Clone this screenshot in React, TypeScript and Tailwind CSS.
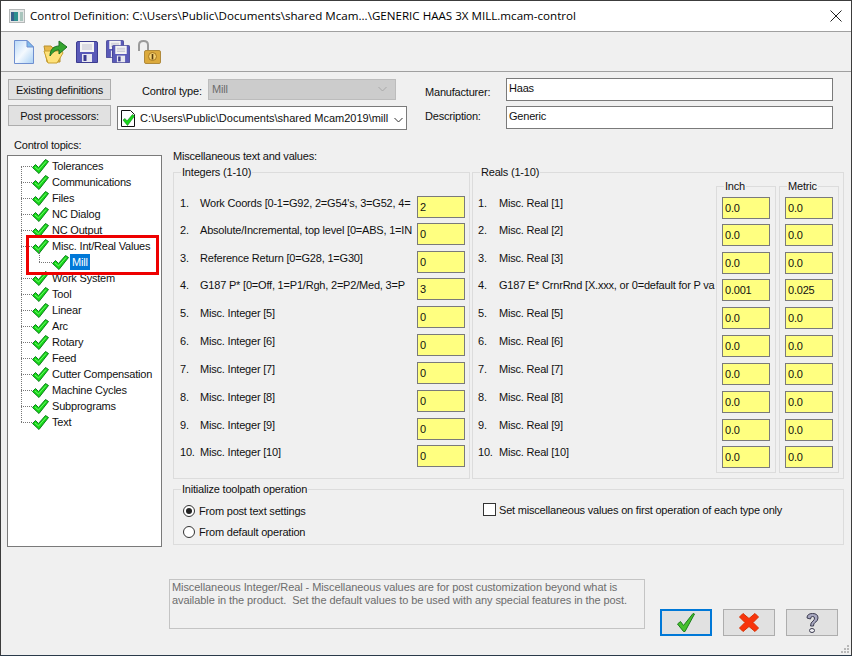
const FONT = "font-['Liberation_Sans',Arial,sans-serif]";

const TOPICS_TOP = ["Tolerances", "Communications", "Files", "NC Dialog", "NC Output", "Misc. Int/Real Values"];
const TOPICS_BOTTOM = ["Work System", "Tool", "Linear", "Arc", "Rotary", "Feed", "Cutter Compensation", "Machine Cycles", "Subprograms", "Text"];

// row pitch in the dialog is not quite even
const ROW_HEIGHTS = ["h-[27px]", "h-[28px]", "h-[27px]", "h-[28px]", "h-[28px]", "h-[28px]", "h-[28px]", "h-[28px]", "h-[27px]", "h-[27px]"];

const INTEGERS = [
  ["Work Coords [0-1=G92, 2=G54's, 3=G52, 4=", "2"],
  ["Absolute/Incremental, top level [0=ABS, 1=IN", "0"],
  ["Reference Return [0=G28, 1=G30]", "0"],
  ["G187 P* [0=Off, 1=P1/Rgh, 2=P2/Med, 3=P", "3"],
  ["Misc. Integer [5]", "0"],
  ["Misc. Integer [6]", "0"],
  ["Misc. Integer [7]", "0"],
  ["Misc. Integer [8]", "0"],
  ["Misc. Integer [9]", "0"],
  ["Misc. Integer [10]", "0"],
];

const REALS = [
  ["Misc. Real [1]", "0.0", "0.0"],
  ["Misc. Real [2]", "0.0", "0.0"],
  ["Misc. Real [3]", "0.0", "0.0"],
  ["G187 E* CrnrRnd [X.xxx, or 0=default for P va", "0.001", "0.025"],
  ["Misc. Real [5]", "0.0", "0.0"],
  ["Misc. Real [6]", "0.0", "0.0"],
  ["Misc. Real [7]", "0.0", "0.0"],
  ["Misc. Real [8]", "0.0", "0.0"],
  ["Misc. Real [9]", "0.0", "0.0"],
  ["Misc. Real [10]", "0.0", "0.0"],
];

const TreeCheck = () => (
  <svg width="17" height="15" viewBox="0 0 17 15" className="shrink-0">
    <path d="M0.5 8.5 L3.5 5.5 L6.5 8.5 L13.5 0.5 L16.5 2.5 L7 14.5 Z" fill="#16d816" stroke="#0c7d1c" strokeWidth="1" strokeLinejoin="round" />
    <path d="M3 8 L6.5 11 L14 2.5" fill="none" stroke="#6cf56c" strokeWidth="1" />
  </svg>
);

const TopicRow = ({ label }: { label: string }) => (
  <div className="flex items-center h-4 pl-[13px]">
    <div className="w-[11px] shrink-0 border-t border-dotted border-[#777]" />
    <TreeCheck />
    <span className="ml-[3px] whitespace-nowrap">{label}</span>
  </div>
);

const YellowBox = ({ value }: { value: string }) => (
  <div className="w-[48px] h-[22px] shrink-0 border border-[#7a7a7a] bg-[#ffff80] pl-[2px] pt-[3px] leading-[14px]">{value}</div>
);

const Group = ({ title, className, children }: { title: string; className: string; children: React.ReactNode }) => (
  <div className={`relative border border-[#dcdcdc] ${className}`}>
    <span className="absolute left-[7px] top-[-7px] bg-[#f0f0f0] px-px leading-[13px] whitespace-nowrap">{title}</span>
    {children}
  </div>
);

const Button = ({ children, className }: { children: React.ReactNode; className: string }) => (
  <div className={`flex items-center justify-center border border-[#adadad] bg-[#e1e1e1] ${className}`}>{children}</div>
);

const TextField = ({ value }: { value: string }) => (
  <div className="w-[327px] h-[23px] border border-[#7a7a7a] bg-white pl-[2px] pt-[2px] leading-[15px]">{value}</div>
);

const Chevron = ({ color }: { color: string }) => (
  <svg width="9" height="6" viewBox="0 0 9 6"><path d="M0.5 1 L4.5 5 L8.5 1" fill="none" stroke={color} strokeWidth="1" /></svg>
);

const NewIcon = () => (
  <svg width="20" height="24" viewBox="0 0 20 24">
    <defs>
      <linearGradient id="page" x1="0" y1="0" x2="1" y2="1">
        <stop offset="0" stopColor="#b8d8f8" />
        <stop offset="0.5" stopColor="#f4f9fe" />
        <stop offset="1" stopColor="#a8d0f4" />
      </linearGradient>
    </defs>
    <path d="M0.5 0.5 H13 L19.5 7 V23.5 H0.5 Z" fill="url(#page)" stroke="#6f8fd0" />
    <path d="M13 0.5 V7 H19.5 Z" fill="#7fbcec" stroke="#6f8fd0" />
  </svg>
);

const OpenIcon = () => (
  <svg width="25" height="24" viewBox="0 0 25 24">
    <path d="M1 6 H8 L10 8 H17 V22 H4 Z" fill="#e8b84a" stroke="#b8902c" />
    <path d="M5 23 L1 11 H19 L20 13 L14 23 Z" fill="#ffe27a" stroke="#c8a030" />
    <path d="M7 16 C7 9 11 6 16 6 V1 L24 7 L16 14 V10 C12 10 10 12 7 16 Z" fill="#35a52f" stroke="#1c6e22" />
  </svg>
);

const FloppyIcon = ({ size = 22 }: { size?: number }) => (
  <svg width={size} height={size} viewBox="0 0 22 22">
    <path d="M0.5 2 Q0.5 0.5 2 0.5 H20 Q21.5 0.5 21.5 2 V21.5 H0.5 Z" fill="#5a5ab8" stroke="#3c3c90" />
    <rect x="4" y="1" width="14" height="10" fill="#f4f4f4" />
    <path d="M6 4 H16 M6 6 H16 M6 8 H16" stroke="#c0c0d0" />
    <rect x="6" y="13" width="10" height="8" fill="#e8e8f0" />
    <rect x="7.5" y="14" width="3" height="6" fill="#3c3c90" />
  </svg>
);

const SaveAllIcon = () => (
  <div className="relative w-[24px] h-[24px]">
    <div className="absolute left-0 top-0"><FloppyIcon size={18} /></div>
    <div className="absolute left-[6px] top-[5px]"><FloppyIcon size={18} /></div>
  </div>
);

const LockIcon = () => (
  <svg width="24" height="24" viewBox="0 0 24 24">
    <path d="M2 11 V5 Q2 1 6.5 1 Q11 1 11 5 V10" fill="none" stroke="#9a9a9a" strokeWidth="2" />
    <rect x="7.5" y="10.5" width="16" height="13" rx="1.5" fill="#dcaa3c" stroke="#b08a3c" />
    <circle cx="15.5" cy="16.5" r="4" fill="#f4d070" stroke="#a87820" />
    <rect x="14.7" y="14" width="1.6" height="5.5" fill="#5a3c10" />
  </svg>
);

const BigCheck = () => (
  <svg width="18" height="19" viewBox="0 0 18 19">
    <path d="M0.5 11 L3.5 8.5 L6.5 12.5 L16 0.5 L17.5 1 L8 18.5 H6.5 Z" fill="#46c02c" stroke="#1c7d1c" strokeLinejoin="round" />
  </svg>
);

const BigX = () => (
  <svg width="20" height="19" viewBox="0 0 20 19">
    <path d="M0.5 4 L4 0.5 L10 5.5 L16 0.5 L19.5 4 L14 9.5 L19.5 15 L16 18.5 L10 13.5 L4 18.5 L0.5 15 L6 9.5 Z" fill="#f8340c" stroke="#d83000" strokeLinejoin="round" />
  </svg>
);

const HelpMark = () => (
  <svg width="15" height="22" viewBox="0 0 15 22">
    <path d="M2 6 Q2 1.5 7.5 1.5 Q13 1.5 13 6 Q13 9 10 10.5 Q8.5 11.5 8.5 14 H5.5 Q5.5 10.5 8 9 Q9.5 8 9.5 6 Q9.5 4.5 7.5 4.5 Q5.5 4.5 5.5 7 Z" fill="#a8a8c0" stroke="#3c3c50" />
    <ellipse cx="7" cy="18.5" rx="2.5" ry="2" fill="#f0f0f4" stroke="#3c3c50" />
  </svg>
);

const App = () => {
  return (
    <div className={`${FONT} w-[852px] h-[656px] flex flex-col overflow-hidden border border-[#3c3c3c] border-b-[#2a3a4a] bg-[#f0f0f0] text-[11px] tracking-[-0.2px] text-[#111] leading-[14px]`}>
      {/* title bar */}
      <div className="flex items-center h-[30px] shrink-0 bg-white pl-[8px] pr-[10px]">
        <svg width="16" height="14" viewBox="0 0 16 14" className="shrink-0">
          <rect x="0.5" y="0.5" width="15" height="13" fill="#e4e6e6" stroke="#b4b8b8" />
          <rect x="2" y="3" width="7" height="9" fill="#2f8f8f" />
          <rect x="2" y="3" width="3" height="9" fill="#38608c" />
          <rect x="11" y="3" width="3" height="9" fill="#a8c4bc" />
        </svg>
        <span className="ml-[5px] text-[11.6px] tracking-normal font-['Open_Sans',sans-serif] text-black whitespace-nowrap">
          Control Definition: C:\Users\Public\Documents\shared Mcam...\GENERIC HAAS 3X MILL.mcam-control
        </span>
        <svg width="12" height="12" viewBox="0 0 12 12" className="ml-auto mr-[-1px]">
          <path d="M0.5 0.5 L11.5 11.5 M11.5 0.5 L0.5 11.5" stroke="#222" strokeWidth="1" />
        </svg>
      </div>

      {/* toolbar */}
      <div className="flex items-center h-[41px] shrink-0 border-y border-[#a0a0a0] pl-[13px]">
        <NewIcon />
        <div className="ml-[9px]"><OpenIcon /></div>
        <div className="ml-[8px]"><FloppyIcon /></div>
        <div className="ml-[8px]"><SaveAllIcon /></div>
        <div className="ml-[7px]"><LockIcon /></div>
      </div>

      {/* definition fields */}
      <div className="flex shrink-0 h-[65px] pl-[7px] pt-[6px]">
        <div className="flex flex-col gap-[5px] w-[103px] mt-px">
          <Button className="h-[21px]">Existing definitions</Button>
          <Button className="h-[21px]">Post processors:</Button>
        </div>
        <div className="flex flex-col w-[290px] ml-[6px]">
          <div className="flex items-center h-[22px] pl-[25px]">
            <span className="w-[66px] mt-[3px] whitespace-nowrap">Control type:</span>
            <div className="flex items-center justify-between w-[188px] h-[21px] border border-[#bcbcbc] bg-[#cccccc] pl-[3px] pr-[8px] text-[#6d6d6d]">
              Mill
              <Chevron color="#a8a8a8" />
            </div>
          </div>
          <div className="flex items-center w-[290px] h-[24px] mt-[6px] border border-[#7a7a7a] bg-white pl-[3px]">
            <svg width="15" height="17" viewBox="0 0 15 17" className="shrink-0">
              <path d="M0.5 0.5 H9.5 L13.5 4.5 V16.5 H0.5 Z" fill="#fff" stroke="#111" />
              <path d="M2 10 L4 8.5 L6 11 L11.5 4.5 L13.5 6 L6.5 15.5 Z" fill="#18d818" stroke="#0c7d1c" strokeWidth="0.6" />
            </svg>
            <span className="ml-[4px] tracking-normal whitespace-nowrap">C:\Users\Public\Documents\shared Mcam2019\mill</span>
            <div className="ml-auto mr-[3px] mt-[3px]"><Chevron color="#333" /></div>
          </div>
        </div>
        <div className="flex flex-col ml-[18px]">
          <div className="flex">
            <span className="w-[81px] pt-[7px]">Manufacturer:</span>
            <TextField value="Haas" />
          </div>
          <div className="flex mt-[5px]">
            <span className="w-[81px] pt-[3px]">Description:</span>
            <TextField value="Generic" />
          </div>
        </div>
      </div>

      {/* main */}
      <div className="flex shrink-0 pl-[6px]">
        <div className="w-[155px] shrink-0 mt-[1px]">
          <div className="ml-[7px] h-[17px]">Control topics:</div>
          <div className="relative w-[155px] h-[392px] border border-[#7a7a7a] bg-white pt-[2px]">
            <div className="absolute left-[13px] top-[10px] h-[256px] border-l border-dotted border-[#777]" />
            {TOPICS_TOP.map((t) => (
              <TopicRow key={t} label={t} />
            ))}
            <div className="relative flex items-center h-4 pl-[31px]">
              <div className="absolute left-[31px] top-[-4px] h-[12px] border-l border-dotted border-[#777]" />
              <div className="w-[13px] shrink-0 border-t border-dotted border-[#777]" />
              <TreeCheck />
              <span className="ml-[1px] bg-[#0078d7] text-white px-[2px] leading-[16px]">Mill</span>
            </div>
            {TOPICS_BOTTOM.map((t) => (
              <TopicRow key={t} label={t} />
            ))}
            <div className="absolute left-[18px] top-[79px] w-[133px] h-[40px] border-[3px] border-[#ee0000]" />
          </div>
        </div>

        <div className="ml-[11px] w-[672px] pt-[11px]">
          <div className="h-[17px] pt-[1px]">Miscellaneous text and values:</div>
          <div className="flex gap-[2px] mt-[7px]">
            <Group title="Integers (1-10)" className="w-[297px] h-[307px] pt-[23px] pl-[6px]">
              {INTEGERS.map(([label, value], i) => (
                <div key={i} className={`flex ${ROW_HEIGHTS[i]}`}>
                  <span className="w-[20px]">{i + 1}.</span>
                  <span className="w-[217px] whitespace-nowrap">{label}</span>
                  <YellowBox value={value} />
                </div>
              ))}
            </Group>
            <Group title="Reals (1-10)" className="flex w-[372px] h-[307px] pl-[5px]">
              <div className="w-[238px] pt-[23px]">
                {REALS.map(([label], i) => (
                  <div key={i} className={`flex ${ROW_HEIGHTS[i]}`}>
                    <span className="w-[21px] shrink-0">{i + 1}.</span>
                    <span className="whitespace-nowrap">{label}</span>
                  </div>
                ))}
              </div>
              <Group title="Inch" className="w-[60px] h-[287px] mt-[13px] pt-[10px] pl-[5px]">
                {REALS.map(([, inch], i) => (
                  <div key={i} className={ROW_HEIGHTS[i]}>
                    <YellowBox value={inch} />
                  </div>
                ))}
              </Group>
              <Group title="Metric" className="w-[60px] h-[287px] mt-[13px] ml-[3px] pt-[10px] pl-[5px]">
                {REALS.map(([, , metric], i) => (
                  <div key={i} className={ROW_HEIGHTS[i]}>
                    <YellowBox value={metric} />
                  </div>
                ))}
              </Group>
            </Group>
          </div>

          <Group title="Initialize toolpath operation" className="flex w-[671px] h-[56px] mt-[10px]">
            <div className="w-[309px] pl-[9px] pt-[10px]">
              <div className="flex items-center h-[21px]">
                <span className="flex items-center justify-center w-[12px] h-[12px] rounded-full border border-[#333] bg-white">
                  <span className="w-[6px] h-[6px] rounded-full bg-[#222]" />
                </span>
                <span className="ml-[4px]">From post text settings</span>
              </div>
              <div className="flex items-center h-[21px]">
                <span className="w-[12px] h-[12px] rounded-full border border-[#333] bg-white" />
                <span className="ml-[4px]">From default operation</span>
              </div>
            </div>
            <div className="flex items-center h-[13px] mt-[13px]">
              <span className="w-[13px] h-[13px] border border-[#333] bg-white" />
              <span className="ml-[3px] whitespace-nowrap">Set miscellaneous values on first operation of each type only</span>
            </div>
          </Group>
        </div>
      </div>

      {/* footer */}
      <div className="relative flex items-end flex-1 pl-[168px]">
        <div className="w-[476px] h-[50px] mb-[26px] border border-[#c4c4c4] px-[2px] pt-[1px] tracking-[-0.08px] text-[#6d6d6d] leading-[13px]">
          Miscellaneous Integer/Real - Miscellaneous values are for post customization beyond what is available in the product.&nbsp; Set the default values to be used with any special features in the post.
        </div>
        <div className="flex gap-[11px] ml-[15px] mb-[19px]">
          <Button className="w-[52px] h-[27px] !border-2 !border-[#0078d7]"><BigCheck /></Button>
          <Button className="w-[52px] h-[27px]"><BigX /></Button>
          <Button className="w-[52px] h-[27px]"><HelpMark /></Button>
        </div>
        <svg width="10" height="10" viewBox="0 0 10 10" className="absolute right-[1px] bottom-[1px]">
          <g fill="#b8b8b8">
            <rect x="7" y="1" width="2" height="2" />
            <rect x="4" y="4" width="2" height="2" />
            <rect x="7" y="4" width="2" height="2" />
            <rect x="1" y="7" width="2" height="2" />
            <rect x="4" y="7" width="2" height="2" />
            <rect x="7" y="7" width="2" height="2" />
          </g>
        </svg>
      </div>
    </div>
  );
};

export default App;
